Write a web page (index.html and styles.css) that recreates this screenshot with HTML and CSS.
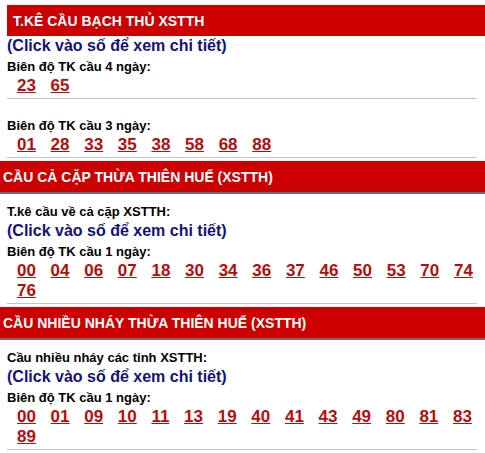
FILE: index.html
```html
<!DOCTYPE html>
<html lang="vi">
<head>
    <meta charset="utf-8">
    <title>Thống kê cầu XSTTH</title>
    <link rel="stylesheet" href="styles.css">
</head>
<body>
    <div class="block first">
        <h2 class="bar">T.KÊ CẦU BẠCH THỦ XSTTH</h2>
        <div class="content">
            <p class="hint">(Click vào số để xem chi tiết)</p>
            <p class="label">Biên độ TK cầu 4 ngày:</p>
            <div class="nums">
                <a href="#">23</a><a href="#">65</a>
            </div>
            <hr>
            <p class="label spaced">Biên độ TK cầu 3 ngày:</p>
            <div class="nums">
                <a href="#">01</a><a href="#">28</a><a href="#">33</a><a href="#">35</a><a href="#">38</a><a href="#">58</a><a href="#">68</a><a href="#">88</a>
            </div>
            <hr>
        </div>
    </div>

    <div class="block">
        <h2 class="bar boxed">CẦU CẢ CẶP THỪA THIÊN HUẾ (XSTTH)</h2>
        <div class="content">
            <p class="label intro">T.kê cầu về cả cặp XSTTH:</p>
            <p class="hint">(Click vào số để xem chi tiết)</p>
            <p class="label">Biên độ TK cầu 1 ngày:</p>
            <div class="nums">
                <a href="#">00</a><a href="#">04</a><a href="#">06</a><a href="#">07</a><a href="#">18</a><a href="#">30</a><a href="#">34</a><a href="#">36</a><a href="#">37</a><a href="#">46</a><a href="#">50</a><a href="#">53</a><a href="#">70</a><a href="#">74</a><a href="#">76</a>
            </div>
            <hr>
        </div>
    </div>

    <div class="block">
        <h2 class="bar boxed">CẦU NHIỀU NHÁY THỪA THIÊN HUẾ (XSTTH)</h2>
        <div class="content">
            <p class="label intro">Cầu nhiều nháy các tỉnh XSTTH:</p>
            <p class="hint">(Click vào số để xem chi tiết)</p>
            <p class="label">Biên độ TK cầu 1 ngày:</p>
            <div class="nums">
                <a href="#">00</a><a href="#">01</a><a href="#">09</a><a href="#">10</a><a href="#">11</a><a href="#">13</a><a href="#">19</a><a href="#">40</a><a href="#">41</a><a href="#">43</a><a href="#">49</a><a href="#">80</a><a href="#">81</a><a href="#">83</a><a href="#">89</a>
            </div>
            <hr>
        </div>
    </div>
</body>
</html>
```

FILE: styles.css
```css
body {
    margin: 0;
    font-family: "Liberation Sans", Arial, Helvetica, sans-serif;
    background-color: #fff;
    color: #000;
}
p {
    margin: 0;
}
.bar {
    margin: 0;
    height: 29px;
    padding: 2px 0 0 3px;
    line-height: 29px;
    font-size: 14px;
    font-weight: bold;
    color: #fff;
    background-color: #cc0000;
}
.first {
    padding-top: 5px;
}
.first .bar {
    margin-left: 7px;
    padding-left: 6px;
}
.boxed {
    border-bottom: 2px solid #6b6b6b;
}
.content {
    margin-left: 7px;
    width: 470px;
}
.hint {
    font-size: 16px;
    font-weight: bold;
    line-height: 20px;
    color: #12127e;
}
.label {
    font-size: 13px;
    font-weight: bold;
    line-height: 18px;
    margin-top: 2px;
}
.label.spaced {
    margin-top: 18px;
}
.label.intro {
    margin-top: 9px;
}
.nums {
    display: flex;
    flex-wrap: wrap;
    column-gap: 14.7px;
    padding-left: 10px;
}
.nums a {
    font-size: 17px;
    font-weight: bold;
    line-height: 20px;
    color: #b50d0d;
    text-decoration: underline;
}
hr {
    margin: 2px 0 3px;
    border: 0;
    border-top: 1px solid #c4c4c4;
}
```
